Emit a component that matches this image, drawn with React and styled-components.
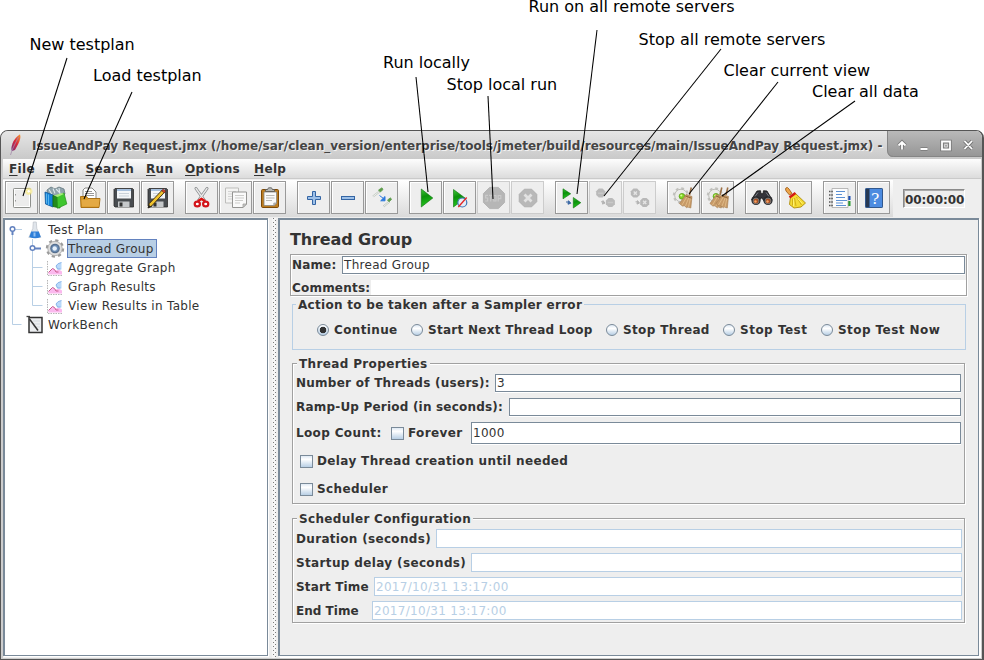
import React from 'react';
import styled, { createGlobalStyle, css } from 'styled-components';

const Global = createGlobalStyle`
  * { box-sizing: border-box; }
  html, body { margin: 0; padding: 0; background: #fff; overflow: hidden; }
  body { font-family: "DejaVu Sans", sans-serif; font-size: 12px; color: #333; }
`;

const steel = '#7a8a99';
const sky = '#b8cfe5';

const Page = styled.div`
  position: relative;
  width: 984px;
  height: 660px;
  padding-top: 130px;
  overflow: hidden;
`;

const Callouts = styled.div`
  position: absolute;
  inset: 0;
  pointer-events: none;
`;
const CalloutText = styled.span`
  position: absolute;
  left: ${(p) => p.$x}px;
  top: ${(p) => p.$y}px;
  font-size: 16px;
  line-height: 14px;
  color: #000;
  white-space: nowrap;
`;
const CalloutLines = styled.svg`
  display: block;
  stroke: #000;
  stroke-width: 1.05;
`;

const Window = styled.div`
  display: flex;
  flex-direction: column;
  width: 984px;
  height: 530px;
  background: #cdcdcd;
  border: 1px solid #555;
  border-right-width: 2px;
  border-radius: 8px 8px 0 0;
  overflow: hidden;
`;
const TitleBar = styled.div`
  display: flex;
  align-items: stretch;
  height: 28px;
  flex: none;
  background: linear-gradient(#e6e6e6, #c9c9c9);
`;
const Feather = styled.svg`
  flex: none;
  width: 31px;
  height: 28px;
`;
const TitleText = styled.div`
  width: 855px;
  flex: none;
  font-size: 12px;
  font-weight: bold;
  line-height: 30px;
  letter-spacing: ${(p) => p.$ls}px;
  color: #444;
  text-shadow: 1px 1px 0 #f2f2f2;
  white-space: nowrap;
`;
const WindowButtons = styled.svg`
  flex: none;
  width: 98px;
  height: 28px;
`;

const MenuBar = styled.div`
  display: flex;
  flex: none;
  height: 20px;
  margin: 0 1px 0 2px;
  padding-left: 6px;
  background: linear-gradient(#fdfdfd, #dcdcdc);
  border-bottom: 1px solid #cacaca;
`;
const MenuItem = styled.div`
  width: ${(p) => p.$w}px;
  font-weight: bold;
  font-size: 12px;
  line-height: 20px;
  letter-spacing: 0.35px;
  white-space: nowrap;
`;
const Mnemonic = styled.span`
  text-decoration: underline;
  text-underline-offset: 2px;
  text-decoration-thickness: 1px;
  text-decoration-skip-ink: none;
`;

const ToolRow = styled.div`
  display: flex;
  flex: none;
  height: 39px;
  margin: 0 1px 0 2px;
  padding: 2px 0 0 2px;
  background: #eee;
`;
const Tools = styled.div`
  display: flex;
  gap: 11px;
  width: 890px;
  height: 37px;
  margin: -1px 0 0 -2px;
  padding: 1px 0 0 2px;
  background: linear-gradient(#fff, #dadada);
  flex: none;
`;
const ToolGroup = styled.div`
  display: flex;
  gap: 1px;
`;
const ToolButton = styled.div`
  width: 33px;
  height: 33px;
  border: 1px solid ${(p) => (p.$off ? '#cccccc' : '#999')};
  background: #eee;
  box-shadow: inset 1px 1px 0 ${(p) => (p.$off ? '#eee' : '#fff')};
  svg { display: block; width: 31px; height: 31px; }
`;
const Timer = styled.div`
  width: 62px;
  height: 19px;
  margin: 8px 0 0 10px;
  border: 1px solid #8a8a8a;
  border-right-color: #fff;
  border-bottom-color: #fff;
  box-shadow: inset 1px 1px 0 #aaa;
  background: #eee;
  font-weight: bold;
  font-size: 12px;
  line-height: 20px;
  padding-left: 1px;
  letter-spacing: ${(p) => p.$ls}px;
  white-space: nowrap;
`;

const Split = styled.div`
  display: flex;
  flex: 1;
  margin: 0 1px 1px 2px;
  background: #eee;
`;
const TreePane = styled.div`
  width: 265px;
  flex: none;
  border: 2px solid ${steel};
  border-right-width: 1px;
  border-bottom-width: 1px;
  background: #fff;
  margin-bottom: 2px;
  box-shadow: 1px 1px 0 #fff;
`;
const Divider = styled.div`
  width: 10px;
  flex: none;
  padding: 0 2px 0 4px;
  &::before {
    content: '';
    display: block;
    height: 100%;
    background: radial-gradient(circle at 0.5px 0.5px, #7b7b7b 0.5px, transparent 0.6px) 1px 0 / 4px 4px,
      radial-gradient(circle at 0.5px 0.5px, #7b7b7b 0.5px, transparent 0.6px) 3px 2px / 4px 4px, #f6f6f6;
  }
`;
const FormPane = styled.div`
  flex: 1;
  border: 2px solid ${steel};
  border-right-width: 1px;
  border-bottom-width: 1px;
  margin: 0 2px 2px 0;
  box-shadow: 1px 1px 0 #fff, 2px 2px 0 #fff;
  padding: 8px 11px 0 10px;
`;

const TreeRow = styled.div`
  display: flex;
  height: 19px;
`;
const TreeArt = styled.svg`
  flex: none;
  width: ${(p) => p.$w}px;
  height: 19px;
`;
const TreeLabel = styled.div`
  font-size: 12px;
  line-height: ${(p) => (p.$sel ? 19 : 20)}px;
  height: 19px;
  padding: 0 1px;
  letter-spacing: ${(p) => p.$ls ?? 0.3}px;
  border: 0 solid #6382bf;
  white-space: nowrap;
  ${(p) => p.$sel && css`
    margin-left: -1px;
    width: 90px;
    padding: 0;
    border-width: 1px;
    background: ${sky};
  `}
`;

const Heading = styled.div`
  font-size: 16px;
  font-weight: bold;
  line-height: 24px;
  height: 26px;
  letter-spacing: ${(p) => p.$ls}px;
`;
const Label = styled.label`
  display: block;
  flex: none;
  width: ${(p) => (p.$w ? `${p.$w}px` : 'auto')};
  font-weight: bold;
  line-height: 18px;
  letter-spacing: ${(p) => p.$ls ?? 0.36}px;
  white-space: nowrap;
`;
const NamePanel = styled.div`
  width: 677px;
  height: 42px;
  border: 1px solid #a0a0a0;
  box-shadow: inset 1px 1px 0 #fff, 1px 1px 0 #fff;
  padding: 1px 0 0 1px;
`;
const Row = styled.div`
  display: flex;
  align-items: ${(p) => p.$align ?? 'center'};
  height: ${(p) => p.$h}px;
  margin-top: ${(p) => p.$mt ?? 0}px;
  padding-left: ${(p) => p.$pl ?? 0}px;
`;
const Field = styled.div`
  flex: 1;
  height: ${(p) => p.$h ?? 18}px;
  margin-right: ${(p) => p.$mr ?? 0}px;
  background: #fff;
  border: 1px solid ${(p) => (p.$off ? sky : steel)};
  box-shadow: ${(p) => (p.$off ? 'none' : '0 1px 0 #fff, inset -1px 0 0 #fff')};
  color: ${(p) => (p.$off ? sky : '#333')};
  font-size: 12px;
  line-height: ${(p) => (p.$h ?? 18) - 1}px;
  padding-left: ${(p) => p.$pl ?? 1}px;
  letter-spacing: ${(p) => p.$ls ?? 0.3}px;
  white-space: nowrap;
`;
const BareField = styled.div`
  flex: 1;
  height: 15px;
  background: #fff;
`;
const Group = styled.section`
  width: ${(p) => p.$w}px;
  height: ${(p) => p.$h}px;
  margin: ${(p) => p.$mt}px 0 0 2px;
  border: 1px solid ${(p) => (p.$blue ? sky : '#a0a0a0')};
  box-shadow: ${(p) => (p.$blue ? 'none' : 'inset 1px 1px 0 #fff, 1px 1px 0 #fff')};
  padding-left: 3px;
`;
const Legend = styled.div`
  width: max-content;
  height: 16px;
  margin: -8px 0 0 ${(p) => p.$ml ?? 1}px;
  padding: 0 2px;
  background: #eee;
  font-weight: bold;
  line-height: 17px;
  letter-spacing: ${(p) => p.$ls ?? 0.36}px;
  white-space: nowrap;
`;
const Radio = styled.span`
  flex: none;
  width: 12px;
  height: 12px;
  margin-right: 5px;
  border-radius: 50%;
  border: 1px solid ${steel};
  background: ${(p) => p.$on
    ? 'radial-gradient(circle, #333 0 3px, transparent 3.6px), linear-gradient(#fff, #b8cfe5)'
    : 'linear-gradient(#dfe9f4, #fff 35%, #b8cfe5)'};
`;
const Check = styled.span`
  flex: none;
  width: 13px;
  height: 13px;
  margin-right: 4px;
  border: 1px solid ${steel};
  background: linear-gradient(#dfe9f4, #fff 30%, #b8cfe5);
`;

/* ---------- toolbar drawings, in the button's own 33px space ---------- */
const Art = ({ children }) => (
  <svg viewBox="1 1 31 31">{children}</svg>
);

const floppy = (
  <>
    <path d="M8 7.500h17.500l1 1v17.500h-18.500l-1-1v-16.500z" fill="#484c50" stroke="#2c2c2c" strokeWidth=".8" />
    <path d="M10 8h14v9.500h-14z" fill="#f3f6f9" />
    <path d="M10 8h14v2h-14z" fill="#a5bfdd" />
    <path d="M12 12.500h10M12 15h10" stroke="#c5ced6" strokeWidth=".9" />
    <path d="M11 20.500h11.500v5.500h-11.500z" fill="#c5c8ca" />
    <path d="M12.500 21.500h3v4h-3z" fill="#333" />
  </>
);
const gearArt = (
  <>
    <circle cx="14" cy="14.500" r="7" fill="none" stroke="#c2c2be" strokeWidth="2.400" strokeDasharray="2.750 2.750" />
    <circle cx="14" cy="14.500" r="6.300" fill="#ebebe9" stroke="#bcbcb8" />
    <circle cx="15" cy="15.300" r="2.900" fill="#7ed321" stroke="#549a12" strokeWidth=".7" />
    <circle cx="14.300" cy="14.500" r="1.100" fill="#d8ff96" />
  </>
);
const whisk = (
  <>
    <path d="M24.300 6.500l-1.800 7.500" stroke="#9d7046" strokeWidth="1.600" />
    <path d="M19 13.500l6 2-1.200 11.500-3-1-1 .8-2.400-2-2 .3-3-2.600z" fill="#c79a68" stroke="#a37a4e" strokeWidth=".6" />
    <path d="M20 15.500l-5 8.500M22 16l-3.500 9M23.500 16.500l-2 9.500" stroke="#e5c18f" strokeWidth=".8" />
    <path d="M18.500 15l6 2.200" stroke="#8c6238" strokeWidth="1" />
  </>
);
const octagon = (cx, cy, r) => {
  const k = r * 0.414;
  return `M${cx - k} ${cy - r}H${cx + k}L${cx + r} ${cy - k}V${cy + k}L${cx + k} ${cy + r}H${cx - k}L${cx - r} ${cy + k}V${cy - k}Z`;
};

const icons = {
  blank: (
    <Art>
      <defs><radialGradient id="glow"><stop offset="0" stopColor="#fff" /><stop offset=".45" stopColor="#fff7a8" /><stop offset="1" stopColor="#f4dc45" stopOpacity="0" /></radialGradient></defs>
      <rect x="8.500" y="7.500" width="17" height="19" rx=".8" fill="#ececec" stroke="#8f918d" />
      <rect x="9.500" y="8.500" width="15" height="17" fill="none" stroke="#fff" />
      <path d="M10.500 13v1.500M10.500 19v1.500" stroke="#999" />
      <circle cx="23.700" cy="10.300" r="4.300" fill="url(#glow)" />
      <circle cx="23.700" cy="10.300" r="1.800" fill="#fff" stroke="#f3e389" strokeWidth=".8" />
    </Art>
  ),
  templates: (
    <Art>
      <path d="M8 9l4-3 4 2 4-2 5 2 1 5-5 4-12 0z" fill="#8fa3ac" stroke="#63767e" strokeWidth=".8" />
      <path d="M10 8.500l3 5M14 7.500l2 5M20 7l1 6M17 8l4 4" stroke="#dbe6ea" strokeWidth="1.100" />
      <path d="M6 11l8 3v12l-7.500-3z" fill="#1583d8" stroke="#0b5799" strokeWidth=".8" />
      <path d="M7.500 12.500v10M9.500 13.500v10.500" stroke="#58b5ee" strokeWidth="1" />
      <path d="M14 14.500l7 2.500v10l-7-1.500z" fill="#228a1d" stroke="#17700f" strokeWidth=".8" />
      <path d="M18 15l7-3 2.800 11-9.300 4.300z" fill="#3fc62f" stroke="#239119" strokeWidth=".7" />
      <path d="M15 14.500l8-2.500 2 1-6.500 3z" fill="#a7ec79" />
    </Art>
  ),
  open: (
    <Art>
      <path d="M10 22v-13l2-2h7l4 4v11z" fill="#fff" stroke="#8b8b88" />
      <path d="M12 10.500h7M12 12.500h9M12 14.500h9" stroke="#999" />
      <path d="M7.500 15.500h6l1.500 2h12l-1 9h-18z" fill="#d99a28" stroke="#a46809" strokeWidth=".9" />
      <path d="M8.500 19h6l1-1h11l-.8 7.500h-16.600z" fill="#e4aa45" />
    </Art>
  ),
  save: <Art>{floppy}</Art>,
  saveAs: (
    <Art>
      {floppy}
      <path d="M7 27l1.300-4.500 13-13.500 2.300 2.200-13 13.800z" fill="#f0c32e" stroke="#35250a" strokeWidth=".9" />
      <path d="M20.700 9.700l1.700-1.700 2.300 2.200-1.500 1.700z" fill="#d04428" stroke="#522" strokeWidth=".6" />
      <path d="M6.800 27.200l1-3.400 2.300 2.200z" fill="#222" />
    </Art>
  ),
  cut: (
    <Art>
      <path d="M11 7.500l8.500 12M22 7.500l-8.500 12" stroke="#85888a" strokeWidth="3" strokeLinecap="round" />
      <path d="M11 7.500l8.500 12M22 7.500l-8.500 12" stroke="#e8e8e8" strokeWidth="1.400" strokeLinecap="round" />
      <path d="M13 20l3.500-2 3.500 2" fill="none" stroke="#d11" strokeWidth="2.500" />
      <ellipse cx="12.300" cy="23" rx="2.600" ry="2.400" fill="#fff" stroke="#d3141b" strokeWidth="2.200" />
      <ellipse cx="20.700" cy="23" rx="2.600" ry="2.400" fill="#fff" stroke="#d3141b" strokeWidth="2.200" />
    </Art>
  ),
  copy: (
    <Art>
      <path d="M6.500 7h13v15h-13z" fill="#f4f4f3" stroke="#bdbdbb" />
      <path d="M9 10.500h8M9 13h8M9 15.500h6M9 18h5" stroke="#d3d3d3" />
      <path d="M13.500 11h14v12l-3.500 3.500h-10.500z" fill="#fafafa" stroke="#959593" />
      <path d="M16 14.500h9M16 17h9M16 19.500h8M16 22h5" stroke="#cdcdcb" />
      <path d="M27.500 23h-3.500v3.500z" fill="#ccc" stroke="#959593" strokeWidth=".7" />
    </Art>
  ),
  paste: (
    <Art>
      <rect x="8.500" y="8.500" width="17" height="18" rx="1.200" fill="#bd7d20" stroke="#7d4a07" />
      <path d="M11 11h12.500v11l-2.500 2.500h-10z" fill="#fafafa" stroke="#898984" strokeWidth=".8" />
      <path d="M13 14.500h8.500M13 17h8.500M13 19.500h6" stroke="#b9b9b5" />
      <path d="M12.500 10.500v-2h2l1-1.700h3l1 1.700h2v2z" fill="#b7b8b4" stroke="#555" strokeWidth=".8" />
      <path d="M23.500 22h-2.700v2.700z" fill="#ccc" stroke="#888" strokeWidth=".6" />
    </Art>
  ),
  plus: <Art><path d="M15.500 10.500h3v5h5v3h-5v5h-3v-5h-5v-3h5z" fill="#9dc0e8" stroke="#3465a4" /></Art>,
  minus: <Art><rect x="10.500" y="15.500" width="13" height="3" fill="#9dc0e8" stroke="#3465a4" /></Art>,
  toggle: (
    <Art>
      <path d="M8 15.500l6.500-5M18.500 25.500l6-5" stroke="#bcc3bc" strokeWidth="2" />
      <path d="M8 15.500l6.500-5M18.500 25.500l6-5" stroke="#f4f7f4" strokeWidth=".9" />
      <path d="M13.500 9l3.500-2.200 1 1.800-2.700 2.400z" fill="#5d9c4b" stroke="#5d9c4b" strokeWidth=".8" />
      <path d="M22.500 19l3-2.200 1 1.700-2.500 2.300z" fill="#5d9c4b" stroke="#5d9c4b" strokeWidth=".8" />
      <path d="M14.500 14.500l4 3M20 15.500v4.300h-4.300z" fill="#2d79de" stroke="#2d79de" strokeWidth="1" />
    </Art>
  ),
  run: (
    <Art>
      <defs><linearGradient id="go" x2=".2" y2="1"><stop offset="0" stopColor="#43c93c" /><stop offset=".45" stopColor="#0b920b" /><stop offset="1" stopColor="#25c51f" /></linearGradient></defs>
      <path d="M12.300 8l11.500 9-11.500 9z" fill="url(#go)" stroke="#087008" strokeWidth=".6" />
    </Art>
  ),
  runNoPause: (
    <Art>
      <path d="M10.500 8.500l11.500 8.500-11.500 9z" fill="url(#go)" stroke="#087008" strokeWidth=".6" />
      <circle cx="19.300" cy="21.500" r="4.500" fill="#e3edf7" stroke="#3e74b5" strokeWidth="1.200" />
      <path d="M15.300 26l8.400-9.500" stroke="#e52222" strokeWidth="1.300" />
    </Art>
  ),
  stop: (
    <Art>
      <path d={octagon(17, 17, 10.6)} fill="#b6b6b6" stroke="#adadad" strokeWidth=".8" />
      <path d="M11 14.300h-2.300v2.700h2v3h-2.500M12 14.300h3.500M13.700 14.300v6.200M16.800 14.500h2.200v5.500h-2.200zM21.200 20.500v-6h2.600v3.200h-2.600" fill="none" stroke="#cacaca" strokeWidth="1.200" />
    </Art>
  ),
  shutdown: (
    <Art>
      <path d={octagon(17, 17, 8.8)} fill="#b8b8b8" stroke="#aaa" strokeWidth=".8" />
      <path d="M13.500 13.500l7 7M20.500 13.500l-7 7" stroke="#e2e2e2" strokeWidth="2.800" />
    </Art>
  ),
  remoteRun: (
    <Art>
      <path d="M8 7.800l7.700 5-7.700 5z" fill="url(#go)" stroke="#087008" strokeWidth=".6" />
      <path d="M18.300 16.500l7.500 5.200-7.500 5.300z" fill="url(#go)" stroke="#087008" strokeWidth=".6" />
      <path d="M11 21h2.500M13.500 19.700l2.300 2.500-2.800 1z" fill="#3866a4" stroke="#3866a4" strokeWidth="1" />
    </Art>
  ),
  remoteStop: (
    <Art>
      <path d={octagon(11.7, 12.1, 4.5)} fill="#bababa" /><path d={octagon(21.4, 21.4, 4.5)} fill="#bababa" />
      <path d="M9 12.300h5.500M18.700 21.500h5.500" stroke="#c8c8c8" strokeWidth="1.500" />
      <path d="M12 20.800h2.500M14 19.600l2 2.500-2.500 1z" fill="#b3b3b3" stroke="#b3b3b3" />
    </Art>
  ),
  remoteShutdown: (
    <Art>
      <path d={octagon(12.3, 12.1, 4.5)} fill="#b8b8b8" /><path d={octagon(21.7, 21.4, 4.5)} fill="#b8b8b8" />
      <path d="M10.700 10.500l3.200 3.200m0-3.200l-3.200 3.200M20.100 19.800l3.200 3.200m0-3.200l-3.200 3.200" stroke="#e4e4e4" strokeWidth="1.400" />
      <path d="M12.500 20.800h2.500M14.500 19.600l2 2.500-2.500 1z" fill="#b3b3b3" stroke="#b3b3b3" />
    </Art>
  ),
  clear: <Art>{gearArt}{whisk}</Art>,
  clearAll: (
    <Art>
      {gearArt}
      <g transform="translate(-3.500 0)">{whisk}</g>
      <g transform="translate(2.500 0)">{whisk}</g>
    </Art>
  ),
  search: (
    <Art>
      <path d="M12 10l3.500-.3.500 3h2l.5-3 3.500.3 5 8.500-7 3-3-4.500h-1l-3 4.500-6.500-3z" fill="#34343a" stroke="#151515" strokeWidth=".8" />
      <circle cx="11" cy="19.500" r="4.600" fill="#292a2e" /><circle cx="23" cy="19.500" r="4.600" fill="#292a2e" />
      <circle cx="11" cy="20" r="2.900" fill="#a94e20" stroke="#777" /><circle cx="23" cy="20" r="2.900" fill="#a94e20" stroke="#777" />
      <circle cx="10.500" cy="20.500" r="1.200" fill="#f2a366" /><circle cx="22.500" cy="20.500" r="1.200" fill="#f2a366" />
      <path d="M13 11.500l-3 4M21 11.500l3 4" stroke="#777b82" />
    </Art>
  ),
  broom: (
    <Art>
      <path d="M6.500 8q0-1.500 2-1.500l1.500 1.500 3 4.500-2.500 1.500-3.500-4z" fill="#eda54a" stroke="#9c570f" strokeWidth=".8" />
      <path d="M11.500 16l5-3.500 10 9.500-4.500 4-7 1-4.500-3.500z" fill="#f5dc35" stroke="#ae8c0a" strokeWidth=".9" />
      <path d="M10.500 16.500l6-4.500" stroke="#d41c12" strokeWidth="2.600" />
      <path d="M13.500 17.500l0 7M15.500 17l1.500 8M17.500 16l5 8" stroke="#c7a512" strokeWidth=".8" />
      <path d="M14.500 18l0 7M18.500 17.500l5 5" stroke="#fff685" strokeWidth=".8" />
    </Art>
  ),
  list: (
    <Art>
      <path d="M25 15h2.500v4h-2.500z" fill="#1c4fb6" /><path d="M25 20h2.500v5h-2.500z" fill="#2a9a30" />
      <path d="M9 7.500h16v19h-16z" fill="#fdfdfd" stroke="#aaa" strokeWidth=".8" />
      <path d="M13 10.500h9M13 13.500h6M13 16.500h9M13 19.500h11M13 22h7M13 24.500h10" stroke="#4b85ce" strokeWidth=".9" />
      <path d="M6 10.500h4M6 14h4M6 17.500h4M6 21h4M6 24.500h4" stroke="#555" strokeWidth="1.300" strokeDasharray="1.500 .8" />
    </Art>
  ),
  help: (
    <Art>
      <rect x="8.500" y="7.500" width="17" height="19" rx=".6" fill="#4c8be0" stroke="#31588e" />
      <path d="M9 8h3.500v18h-3.500z" fill="#263852" />
      <text x="14" y="22.500" fontFamily="DejaVu Serif, serif" fontSize="15.500" fill="#fff">?</text>
    </Art>
  ),
};

const toolbar = [
  ['blank', 'templates', 'open', 'save', 'saveAs'],
  ['cut', 'copy', 'paste'],
  ['plus', 'minus', 'toggle'],
  ['run', 'runNoPause', 'stop', 'shutdown'],
  ['remoteRun', 'remoteStop', 'remoteShutdown'],
  ['clear', 'clearAll'],
  ['search', 'broom'],
  ['list', 'help'],
];
const disabled = new Set(['stop', 'shutdown', 'remoteStop', 'remoteShutdown']);

/* ---------- tree drawings ---------- */
const Flask = () => (
  <g>
    <path d="M28.300 2h3l.5 6.500 4 9h-12l4-9z" fill="#e0e5eb" stroke="#bcc2c9" strokeWidth=".7" />
    <path d="M26.300 11.500h7.500l2 5.500q-5.500 2.500-11.500 0z" fill="#2f7fd8" />
    <path d="M28.500 12.500h2v4h-2z" fill="#8fc0f2" />
  </g>
);
const Gear = () => (
  <g>
    <circle cx="50" cy="9.500" r="8" fill="none" stroke="#9a9a9a" strokeWidth="2.400" strokeDasharray="3.140 3.140" />
    <circle cx="50" cy="9.500" r="7.200" fill="#dedede" stroke="#a6a6a6" strokeWidth=".8" />
    <circle cx="50" cy="9.500" r="4.200" fill="#6b8db6" stroke="#566f8e" strokeWidth="1.200" />
    <circle cx="49.700" cy="9.500" r="2.200" fill="#e6f0fa" />
  </g>
);
const Chart = () => (
  <g>
    <path d="M42.500 3v14.500h15.500" fill="none" stroke="#b5b5b5" strokeDasharray="1.500 1" />
    <path d="M43.500 16.500v-2l4.500-4 2.500 2 3.500-1 3 2v3z" fill="#fbb9ee" />
    <path d="M43.500 14.500l4-4 2 1 1.500 2.500 2.500 0" fill="none" stroke="#c8588a" strokeWidth="1" />
    <path d="M56.500 4.500q-4 .5-5.500 3.500l1.500 3.500h4z" fill="#b9d9fa" />
    <path d="M56.500 4.500q-4 .5-5.500 3.500l1.500 3h3" fill="none" stroke="#7faee6" strokeWidth=".9" />
  </g>
);
const Notebook = () => (
  <g>
    <path d="M24 2.500h13v15h-13z" fill="#eceef0" stroke="#333" strokeWidth="1.500" />
    <path d="M28 6h7M28 9h7M28 12h7" stroke="#d3d8de" />
    <path d="M21.500 1.500h3.500" stroke="#444" strokeWidth="1.300" />
    <path d="M24.500 4l8.500 11.500" stroke="#333" strokeWidth="1.500" />
  </g>
);

const WindowTitle = ({ title }) => (
  <TitleBar>
    <Feather viewBox="1 131 31 28">
      <defs><linearGradient id="fe" x1="1" x2="0" y2="1"><stop offset="0" stopColor="#f59b2e" /><stop offset=".5" stopColor="#d8253b" /><stop offset="1" stopColor="#74307d" /></linearGradient></defs>
      <path d="M20 134.300q1.300 3.500-1.500 9.200l-3.500 6.500-3 1q-1.500-2 .5-7.500t7.500-9.200z" fill="url(#fe)" />
      <path d="M18.500 137l-6 12-2 6" fill="none" stroke="#a58cab" strokeWidth=".8" />
    </Feather>
    <TitleText $ls={0.008}>{title}</TitleText>
    <WindowButtons viewBox="887 131 98 28">
      <defs><linearGradient id="wb" x2="0" y2="1"><stop offset="0" stopColor="#b9b9b9" /><stop offset="1" stopColor="#959595" /></linearGradient></defs>
      <path d="M887 131h98v26h-92q-5 0-6-6z" fill="url(#wb)" />
      <path d="M887.500 131v19q0 6.500 6 6.500h92" fill="none" stroke="#858585" />
      <g fill="none" stroke="#777" strokeWidth="3.500"><path d="M898.500 145.500l3.500-3.500 3.500 3.500M902 142.500v7M920.500 149h7M942 141.500h8v8h-8zM964.500 141l7.500 8M972 141l-7.500 8" /></g>
      <g fill="none" stroke="#fff" strokeWidth="1.800"><path d="M898.500 145.500l3.500-3.500 3.500 3.500M902 142.500v7M920.500 149h7M942 141.500h8v8h-8zM964.500 141l7.500 8M972 141l-7.500 8" /></g>
      <path d="M944.500 144.500h3v2.500h-3z" fill="none" stroke="#ddd" strokeWidth=".8" />
    </WindowButtons>
  </TitleBar>
);

const menus = [['File', 37], ['Edit', 39.5], ['Search', 60.5], ['Run', 39], ['Options', 69], ['Help', 50]];

const callouts = [
  ['New testplan', 29.5, 37.5, 67, 58, 23, 196],
  ['Load testplan', 93, 68.5, 132, 92, 84, 199],
  ['Run locally', 383, 55.5, 416, 77, 428, 192],
  ['Stop local run', 446.5, 77.5, 488, 96, 493, 199],
  ['Run on all remote servers', 528.5, 0, 597, 30, 577, 194],
  ['Stop all remote servers', 638.5, 32.5, 721, 49, 604, 196],
  ['Clear current view', 723.5, 63.5, 778, 82, 689, 194],
  ['Clear all data', 812, 84.5, 855, 101, 722, 196],
];

const radios = [['Continue', 94, 0.36], ['Start Next Thread Loop', 195, 0.28], ['Stop Thread', 117, 0.36], ['Stop Test', 98, 0.5], ['Stop Test Now', 120, 0.44]];

const RadioItem = styled.div`
  display: flex;
  align-items: center;
  width: ${(p) => p.$w}px;
`;

export default function App() {
  return (
    <Page>
      <Global />
      <Window>
        <WindowTitle title="IssueAndPay Request.jmx (/home/sar/clean_version/enterprise/tools/jmeter/build/resources/main/IssueAndPay Request.jmx) -" />
        <MenuBar>
          {menus.map(([m, w]) => (
            <MenuItem key={m} $w={w}><Mnemonic>{m[0]}</Mnemonic>{m.slice(1)}</MenuItem>
          ))}
        </MenuBar>
        <ToolRow>
          <Tools>
            {toolbar.map((group) => (
              <ToolGroup key={group[0]}>
                {group.map((name) => (
                  <ToolButton key={name} $off={disabled.has(name)}>{icons[name]}</ToolButton>
                ))}
              </ToolGroup>
            ))}
          </Tools>
          <Timer $ls={-0.05}>00:00:00</Timer>
        </ToolRow>
        <Split>
          <TreePane>
            <TreeRow>
              <TreeArt $w={42} viewBox="0 0 42 19">
                <path d="M8 9.500h9M7.500 9v10" stroke={sky} />
                <path d="M7.500 11v4" stroke="#6382bf" strokeWidth="2" />
                <circle cx="7.500" cy="9" r="2.300" fill="#fff" stroke="#6382bf" strokeWidth="1.500" />
                <Flask />
              </TreeArt>
              <TreeLabel>Test Plan</TreeLabel>
            </TreeRow>
            <TreeRow>
              <TreeArt $w={63} viewBox="0 0 63 19">
                <path d="M7.500 0v19M27.500 0v19" stroke={sky} />
                <path d="M30 9.500h6" stroke="#6382bf" strokeWidth="2" />
                <circle cx="27.500" cy="9" r="2.300" fill="#fff" stroke="#6382bf" strokeWidth="1.500" />
                <Gear />
              </TreeArt>
              <TreeLabel $sel $ls={0.27}>Thread Group</TreeLabel>
            </TreeRow>
            {['Aggregate Graph', 'Graph Results', 'View Results in Table'].map((t, i) => (
              <TreeRow key={t}>
                <TreeArt $w={62} viewBox="0 0 62 19">
                  <path d={i < 2 ? 'M7.500 0v19M27.500 0v19M27.500 9.500h10' : 'M7.500 0v19M27.500 0v9.500h10'} fill="none" stroke={sky} />
                  <Chart />
                </TreeArt>
                <TreeLabel>{t}</TreeLabel>
              </TreeRow>
            ))}
            <TreeRow>
              <TreeArt $w={42} viewBox="0 0 42 19">
                <path d="M7.500 0v9.500h9" fill="none" stroke={sky} />
                <Notebook />
              </TreeArt>
              <TreeLabel>WorkBench</TreeLabel>
            </TreeRow>
          </TreePane>
          <Divider />
          <FormPane>
            <Heading $ls={-0.13}>Thread Group</Heading>
            <NamePanel>
              <Row $h={18}>
                <Label $w={50} $ls={0.15}>Name:</Label>
                <Field $mr={1}>Thread Group</Field>
              </Row>
              <Row $h={15} $mt={6}>
                <Label $w={79} $ls={0.2}>Comments:</Label>
                <BareField />
              </Row>
            </NamePanel>
            <Group $w={674} $h={46} $mt={8} $blue>
              <Legend $ml={0} $ls={0.29}>Action to be taken after a Sampler error</Legend>
              <Row $h={20} $mt={7} $pl={21}>
                {radios.map(([t, w, ls], i) => (
                  <RadioItem key={t} $w={w}><Radio $on={i === 0} /><Label $ls={ls}>{t}</Label></RadioItem>
                ))}
              </Row>
            </Group>
            <Group $w={673} $h={141} $mt={13}>
              <Legend>Thread Properties</Legend>
              <Row $h={18} $mt={2}><Label $w={199} $ls={0.26}>Number of Threads (users):</Label><Field $mr={3}>3</Field></Row>
              <Row $h={18} $mt={6}><Label $w={213} $ls={0.2}>Ramp-Up Period (in seconds):</Label><Field $mr={3} /></Row>
              <Row $h={22} $mt={6}>
                <Label $w={95}>Loop Count:</Label><Check /><Label $w={63}>Forever</Label><Field $mr={3} $h={22}>1000</Field>
              </Row>
              <Row $h={18} $mt={8} $pl={4}><Check /><Label>Delay Thread creation until needed</Label></Row>
              <Row $h={18} $mt={10} $pl={4}><Check /><Label>Scheduler</Label></Row>
            </Group>
            <Group $w={673} $h={105} $mt={14}>
              <Legend $ls={0.32}>Scheduler Configuration</Legend>
              <Row $h={19} $mt={2}><Label $w={140} $ls={0.32}>Duration (seconds)</Label><Field $off $h={19} $mr={2} /></Row>
              <Row $h={19} $mt={5}><Label $w={175}>Startup delay (seconds)</Label><Field $off $h={19} $mr={2} /></Row>
              <Row $h={19} $mt={5}><Label $w={78} $ls={0.15}>Start Time</Label><Field $off $h={19} $mr={2}>2017/10/31 13:17:00</Field></Row>
              <Row $h={19} $mt={5}><Label $w={76} $ls={0.02}>End Time</Label><Field $off $h={19} $mr={2}>2017/10/31 13:17:00</Field></Row>
            </Group>
          </FormPane>
        </Split>
      </Window>
      <Callouts>
        <CalloutLines width="984" height="660">
          {callouts.map(([t, , , x1, y1, x2, y2]) => <line key={t} x1={x1} y1={y1} x2={x2} y2={y2} />)}
        </CalloutLines>
        {callouts.map(([t, x, y]) => <CalloutText key={t} $x={x} $y={y}>{t}</CalloutText>)}
      </Callouts>
    </Page>
  );
}
